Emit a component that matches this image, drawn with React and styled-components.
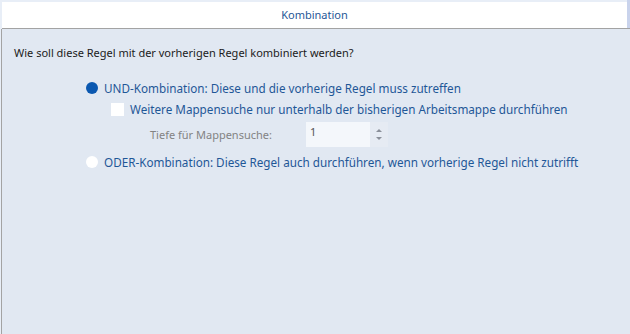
import styled, { createGlobalStyle } from 'styled-components';

const GlobalStyle = createGlobalStyle`
  html, body {
    margin: 0;
    padding: 0;
    width: 630px;
    height: 334px;
    overflow: hidden;
    background: #e8eef7;
    font-family: "Noto Sans", "Open Sans", sans-serif;
    font-size: 11px;
  }
`;

const App = () => {
  return (
    <>
      <GlobalStyle />
      <Page>
        <HeaderRow>
          <TabHeader>Kombination</TabHeader>
          <EdgeStrip />
        </HeaderRow>
        <Content>
          <Question>Wie soll diese Regel mit der vorherigen Regel kombiniert werden?</Question>
          <Options>
            <OptionRow>
              <Radio checked />
              <OptionLabel>UND-Kombination: Diese und die vorherige Regel muss zutreffen</OptionLabel>
            </OptionRow>
            <SubOptions>
              <OptionRow>
                <Checkbox />
                <OptionLabel>Weitere Mappensuche nur unterhalb der bisherigen Arbeitsmappe durchführen</OptionLabel>
              </OptionRow>
              <DepthRow>
                <DepthLabel>Tiefe für Mappensuche:</DepthLabel>
                <Spin>
                  <SpinValue>1</SpinValue>
                  <SpinButtons>
                    <Arrow up />
                    <Arrow />
                  </SpinButtons>
                </Spin>
              </DepthRow>
            </SubOptions>
            <OptionRow>
              <Radio />
              <OptionLabel>ODER-Kombination: Diese Regel auch durchführen, wenn vorherige Regel nicht zutrifft</OptionLabel>
            </OptionRow>
          </Options>
        </Content>
      </Page>
    </>
  );
};

const Page = styled.div`
  width: 630px;
  height: 334px;
  display: flex;
  flex-direction: column;
  padding-top: 2px;
  box-sizing: border-box;
`;
const HeaderRow = styled.div`
  display: flex;
  height: 27px;
  padding-left: 2px;
`;
const TabHeader = styled.div`
  flex: 1;
  background: #ffffff;
  border-bottom: 1px solid #a3a3a3;
  color: #1f5797;
  display: flex;
  align-items: center;
  justify-content: center;
  padding-bottom: 1px;
`;
const EdgeStrip = styled.div`
  width: 3px;
  margin-top: -2px;
  background: #c9d3ec;
  border-bottom: 1px solid #a3a3a3;
`;
const Content = styled.div`
  flex: 1;
  background: #e1e8f2;
  border-left: 1px solid #a3a3a3;
  margin-left: 1px;
  padding: 16px 0 0 12px;
`;
const Question = styled.div`
  color: #1b1b1b;
  line-height: 16px;
`;
const Options = styled.div`
  display: flex;
  flex-direction: column;
  padding: 19px 0 0 72px;
`;
const OptionRow = styled.div`
  display: flex;
  align-items: center;
  gap: 6px;
  height: 16px;
`;
const OptionLabel = styled.span`
  color: #1f5797;
  font-size: 11.7px;
  line-height: 16px;
  white-space: nowrap;
`;
const Radio = styled.span`
  width: 12px;
  height: 12px;
  border-radius: 50%;
  background: ${(p) => (p.checked ? '#0b58b0' : '#ffffff')};
  flex-shrink: 0;
`;
const SubOptions = styled.div`
  display: flex;
  flex-direction: column;
  gap: 5px;
  padding: 5px 0 7px 25px;
`;
const Checkbox = styled.span`
  width: 13px;
  height: 13px;
  background: #ffffff;
  flex-shrink: 0;
`;
const DepthRow = styled.div`
  display: flex;
  align-items: center;
  padding-left: 39px;
  height: 25px;
`;
const DepthLabel = styled.span`
  color: #838383;
  width: 156px;
`;
const Spin = styled.div`
  display: flex;
  width: 82px;
  height: 25px;
  background: #f4f7fb;
`;
const SpinValue = styled.span`
  flex: 1;
  color: #555555;
  padding: 2px 0 0 4px;
`;
const SpinButtons = styled.div`
  width: 18px;
  background: #e6ebf3;
  display: flex;
  flex-direction: column;
  align-items: center;
  justify-content: center;
  gap: 5px;
`;
const Arrow = styled.span`
  width: 0;
  height: 0;
  border-left: 3px solid transparent;
  border-right: 3px solid transparent;
  ${(p) => (p.up ? 'border-bottom: 3px solid #8a8f99;' : 'border-top: 3px solid #8a8f99;')}
`;

export default App;
